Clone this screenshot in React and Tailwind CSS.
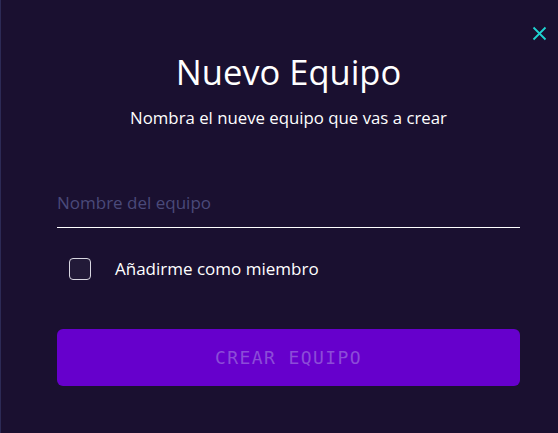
import { useState } from "react"

function App()
{
    const [name, setName] = useState("")
    const [member, setMember] = useState(false)
    return (
        <div className="h-[433px] w-[558px] bg-[#1a1030] border-l border-[#2c2a55] relative" style={{ fontFamily: "'Open Sans', sans-serif" }}>
            <button className="absolute right-[11px] top-[26px] text-[#1fd3d0]">
                <svg width="15" height="15" viewBox="0 0 15 15" fill="none" stroke="currentColor" strokeWidth="1.8">
                    <path d="M1.5 1.5L13.5 13.5M13.5 1.5L1.5 13.5" />
                </svg>
            </button>
            <div className="flex flex-col pl-[56px] pr-[38px] pt-[49px]">
                <h2 className="text-center text-[34.5px] leading-[46px] text-white">Nuevo Equipo</h2>
                <p className="text-center text-[16.8px] leading-[24px] text-white mt-[11px]">Nombra el nueve equipo que vas a crear</p>
                <input
                    autoFocus
                    value={name}
                    onChange={(e) => setName(e.target.value)}
                    placeholder="Nombre del equipo"
                    className="mt-[58px] h-[40px] w-full bg-transparent border-b border-white text-[17px] text-white placeholder:text-[#4a4a7a] outline-none pb-[11px] caret-white"
                />
                <label className="mt-[28px] flex items-center gap-[24px] pl-[12px] cursor-pointer">
                    <input
                        type="checkbox"
                        checked={member}
                        onChange={() => setMember(!member)}
                        className="appearance-none h-[22px] w-[22px] rounded-[4px] border border-[#d8d6e0] bg-[#221a38]"
                    />
                    <span className="text-[17px] text-white">Añadirme como miembro</span>
                </label>
                <button className="mt-[47px] h-[57px] w-full rounded-[6px] bg-[#6600cc] text-[#8c4cd8] text-[18px] tracking-[1.4px]" style={{ fontFamily: "'DejaVu Sans Mono', monospace" }}>
                    CREAR EQUIPO
                </button>
            </div>
        </div>
    )
}
export default App
